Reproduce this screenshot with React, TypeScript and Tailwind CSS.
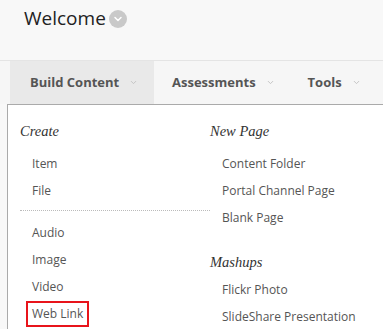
import { ChevronDown } from 'lucide-react'

const sans = "font-['Open_Sans',sans-serif]"
const serif = "font-['Liberation_Serif',serif]"

function Item({ label, boxed }: { label: string; boxed?: boolean }) {
  return (
    <div className="h-[27px] flex items-center">
      {boxed ? (
        <span className="ml-[6px] border-2 border-[#e8141b] h-[26px] px-[4px] flex items-center text-[12px] text-[#555]">
          {label}
        </span>
      ) : (
        <span className="pl-[12px] text-[12px] text-[#555]">{label}</span>
      )}
    </div>
  )
}

function Heading({ label, className = '' }: { label: string; className?: string }) {
  return (
    <div className={`h-[20px] flex items-center italic text-[14.5px] text-[#333] ${serif} ${className}`}>
      {label}
    </div>
  )
}

function NavTab({ label, active, className = '' }: { label: string; active?: boolean; className?: string }) {
  return (
    <div
      className={`h-full flex items-center gap-[10px] text-[13px] font-bold text-[#555] ${
        active ? 'bg-[#e9e9e9] pl-[20px] w-[144px]' : ''
      } ${className}`}
    >
      {label}
      <ChevronDown className="w-[9px] h-[9px] text-[#c2c2c2]" strokeWidth={2.5} />
    </div>
  )
}

export default function App() {
  return (
    <div className={`w-[383px] h-[329px] bg-[#f8f8f8] overflow-hidden ${sans}`}>
      {/* Header */}
      <div className="h-[60px] pl-[24px] pt-[4px] flex items-start gap-[3px]">
        <span className="text-[19px] leading-[28px] text-[#222]">Welcome</span>
        <span className="mt-[6px] w-[18px] h-[18px] rounded-full bg-[#c9c9c9] flex items-center justify-center">
          <ChevronDown className="w-[12px] h-[12px] text-white" strokeWidth={3} />
        </span>
      </div>

      {/* Nav */}
      <div className="h-[44px] border-t border-[#e4e4e4] bg-[#f6f6f6] pl-[10px] flex">
        <NavTab label="Build Content" active />
        <NavTab label="Assessments" className="ml-[18px]" />
        <NavTab label="Tools" className="ml-[33px]" />
      </div>

      {/* Dropdown */}
      <div className="ml-[7px] h-full border-l border-t border-[#aaa] bg-white flex pl-[12px] pt-[17px]">
        <div className="w-[190px]">
          <Heading label="Create" />
          <div className="h-[8px]" />
          <Item label="Item" />
          <Item label="File" />
          <div className="mt-[6px] mb-[8px] border-t border-dotted border-[#bbb]" />
          <Item label="Audio" />
          <Item label="Image" />
          <Item label="Video" />
          <Item label="Web Link" boxed />
        </div>
        <div className="flex-1">
          <Heading label="New Page" />
          <div className="h-[8px]" />
          <Item label="Content Folder" />
          <Item label="Portal Channel Page" />
          <Item label="Blank Page" />
          <Heading label="Mashups" className="mt-[22px]" />
          <div className="h-[3px]" />
          <Item label="Flickr Photo" />
          <Item label="SlideShare Presentation" />
        </div>
      </div>
    </div>
  )
}
